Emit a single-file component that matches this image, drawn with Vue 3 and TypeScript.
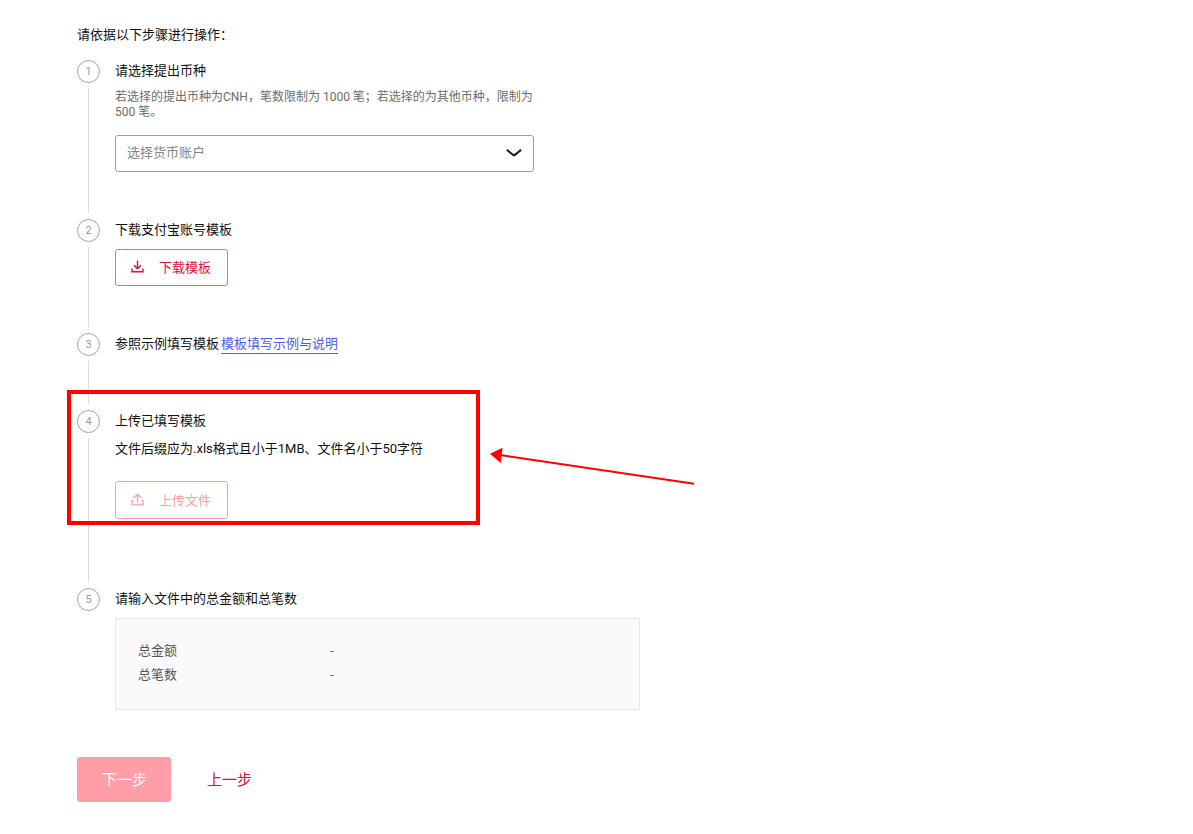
<script setup lang="ts">
import { ref } from 'vue'

interface Total {
  label: string
  value: string
}

const currency = ref('')
const totals: Total[] = [
  { label: '总金额', value: '-' },
  { label: '总笔数', value: '-' },
]
</script>

<template>
  <main class="page">
    <p class="intro">请依据以下步骤进行操作：</p>

    <ol class="steps">
      <li class="step">
        <div class="rail"><span class="badge">1</span></div>
        <div class="body">
          <label class="title" for="currency">请选择提出币种</label>
          <p class="hint">若选择的提出币种为CNH，笔数限制为 1000 笔；若选择的为其他币种，限制为<br />500 笔。</p>
          <div class="picker">
            <select id="currency" v-model="currency">
              <option value="">选择货币账户</option>
              <option value="CNH">CNH</option>
            </select>
            <svg class="chevron" width="16" height="10" viewBox="0 0 16 10" aria-hidden="true">
              <path d="M1 1.6Q2.5 3.6 8 7.4Q13.5 3.6 15 1.6" fill="none" stroke="#1a1a1e" stroke-width="2" />
            </svg>
          </div>
        </div>
      </li>

      <li class="step">
        <div class="rail"><span class="badge">2</span></div>
        <div class="body">
          <h2 class="title">下载支付宝账号模板</h2>
          <button type="button" class="outline">
            <svg width="13" height="13" viewBox="0 0 13 13" aria-hidden="true">
              <path d="M6.5 0.5V8.5M3 5.2L6.5 8.7L10 5.2M1 8.5V11.8H12V8.5" fill="none" stroke="currentColor" stroke-width="1.4" />
            </svg>
            <span>下载模板</span>
          </button>
        </div>
      </li>

      <li class="step">
        <div class="rail"><span class="badge">3</span></div>
        <div class="body">
          <h2 class="title">参照示例填写模板<a class="link" href="#guide">模板填写示例与说明</a></h2>
        </div>
      </li>

      <li class="step upload">
        <div class="rail"><span class="badge">4</span></div>
        <div class="body">
          <h2 class="title">上传已填写模板</h2>
          <p class="rule">文件后缀应为.xls格式且小于1MB、文件名小于50字符</p>
          <button type="button" class="outline" disabled>
            <svg width="13" height="13" viewBox="0 0 13 13" aria-hidden="true">
              <path d="M6.5 9.5V1.5M2.8 5L6.5 1.2L10.2 5M2.6 7.5H1V11.8H12V7.5H10.4" fill="none" stroke="currentColor" stroke-width="1.3" />
            </svg>
            <span>上传文件</span>
          </button>
        </div>
        <div class="marker" aria-hidden="true"></div>
        <svg class="arrow" width="206" height="40" viewBox="0 0 206 40" aria-hidden="true">
          <path d="M10 8L204 36.8" stroke="#ff0000" stroke-width="2" />
          <path d="M0 6.7L12.6 0.7L10.6 15.9Z" fill="#ff0000" />
        </svg>
      </li>

      <li class="step">
        <div class="rail"><span class="badge">5</span></div>
        <div class="body">
          <h2 class="title">请输入文件中的总金额和总笔数</h2>
          <dl class="summary">
            <div v-for="total in totals" :key="total.label" class="total">
              <dt>{{ total.label }}</dt>
              <dd>{{ total.value }}</dd>
            </div>
          </dl>
        </div>
      </li>
    </ol>

    <div class="actions">
      <button type="button" class="next" disabled>下一步</button>
      <button type="button" class="back">上一步</button>
    </div>
  </main>
</template>

<style>
body {
  margin: 0;
  background: #fff;
}
</style>

<style scoped>
.page {
  padding: 24px 77px 32px;
  font-family: Roboto, "Noto Sans CJK SC", sans-serif;
  font-size: 13px;
  line-height: 22px;
  color: #111;
}

.page * {
  box-sizing: border-box;
}

button,
select {
  font-family: inherit;
  font-size: 13px;
}

.intro {
  margin: 0 0 14px;
}

.steps {
  margin: 0;
  padding: 0;
  list-style: none;
}

.step {
  position: relative;
  display: flex;
  gap: 15px;
}

.rail {
  display: flex;
  flex: none;
  flex-direction: column;
  align-items: center;
  width: 23px;
}

.badge {
  width: 23px;
  height: 23px;
  border: 1px solid #a3a3a3;
  border-radius: 50%;
  font-size: 11px;
  line-height: 22px;
  text-align: center;
  color: #999;
}

.step:not(:last-child) .rail::after {
  content: "";
  flex: 1;
  width: 1px;
  margin: 5px 0 6px;
  background: #dcdcdc;
}

.body {
  flex: 1;
  min-width: 0;
  padding-bottom: 47px;
}

.upload .body {
  padding-bottom: 69px;
}

.title {
  display: block;
  margin: 0 0 8px;
  font-size: 13px;
  font-weight: 400;
}

.hint {
  margin: 0 0 15px;
  font-size: 12px;
  line-height: 15px;
  color: #6c6c6c;
}

.picker {
  position: relative;
  max-width: 419px;
}

.picker select {
  display: block;
  width: 100%;
  height: 37px;
  padding: 0 40px 2px 11px;
  border: 1px solid #a0a0a0;
  border-radius: 3px;
  appearance: none;
  background: #fff;
  color: #858585;
}

.chevron {
  position: absolute;
  top: 13px;
  right: 12px;
  pointer-events: none;
}

.outline {
  display: flex;
  align-items: center;
  gap: 15px;
  height: 37px;
  padding: 0 16px 2px 15px;
  border: 1px solid #f8697c;
  border-radius: 3px;
  background: #fff;
  color: #db0f3b;
}

.outline:disabled {
  height: 38px;
  border-color: #ff9ea7;
  color: #ff9ea7;
}

.link {
  display: inline-block;
  margin-left: 2px;
  border-bottom: 1px solid #4d5fe0;
  line-height: 18px;
  text-decoration: none;
  color: #4d5fe0;
}

.rule {
  margin: 0 0 24px;
  line-height: 17px;
}

.marker {
  position: absolute;
  top: -20px;
  left: -10px;
  width: 413px;
  height: 135px;
  border: 4px solid #ff0000;
}

.arrow {
  position: absolute;
  top: 37px;
  left: 413px;
}

.summary {
  max-width: 525px;
  margin: 0;
  padding: 20px 22px 22px;
  border: 1px solid #e1e5fb;
  background: #fafafd;
  line-height: 24px;
  color: #555;
}

.total {
  display: grid;
  grid-template-columns: 192px 1fr;
}

.total dd {
  margin: 0;
}

.actions {
  display: flex;
  gap: 36px;
}

.actions button {
  height: 45px;
  border: 0;
  border-radius: 3px;
  font-size: 15px;
}

.actions .next {
  padding: 0 24px 3px 25px;
  background: #ff9ea7;
  color: #fff;
}

.actions .back {
  padding: 0 0 3px;
  background: none;
  color: #db0f3b;
}
</style>
